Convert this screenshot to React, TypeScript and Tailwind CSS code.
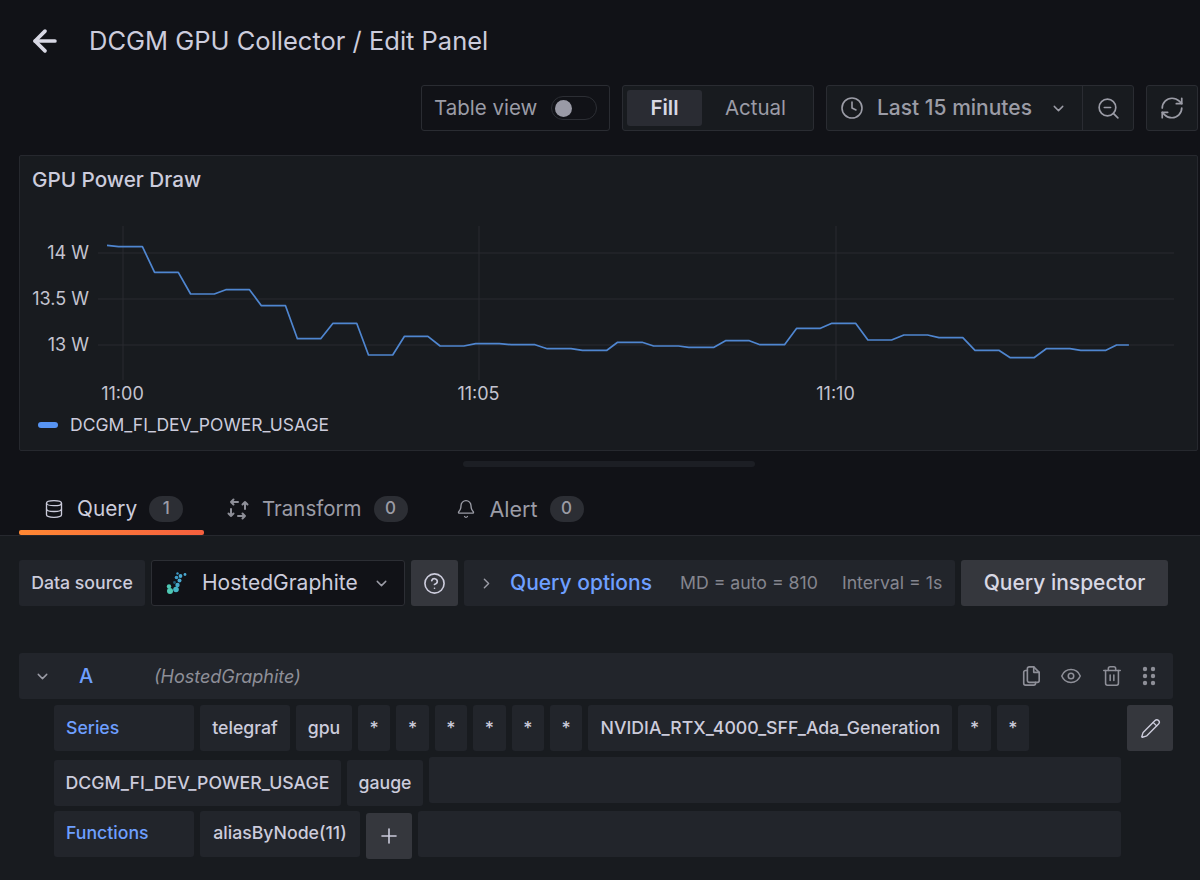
import React from 'react';
import {
  ArrowLeft, Bell, ChevronDown, ChevronRight, CircleHelp, Clock, Database, Eye,
  Pencil, Plus, RefreshCw, Trash2, ZoomOut,
} from 'lucide-react';

// Series trace, in page coordinates
const trace = [
  [107, 245.3], [118.6, 246.7], [142.4, 246.7], [154.6, 272.3], [178.3, 272.3], [190.6, 294], [214.3, 294],
  [225.8, 289.7], [249.5, 289.7], [261.4, 305.7], [285.5, 305.7], [297.4, 338.7], [320.7, 338.7], [333, 323.3],
  [356.7, 323.3], [368.5, 355], [392.7, 355], [404.5, 336.3], [427.9, 336.3], [440.1, 346], [463.8, 346],
  [475.7, 343.7], [499.4, 343.7], [511.3, 344.7], [535, 344.7], [547.3, 348.7], [571, 348.7], [582.5, 350.3],
  [606.9, 350.3], [617.6, 342.3], [642.1, 342.3], [653.6, 346], [678.5, 346], [688.8, 347.3], [714, 347.3],
  [725.5, 340.7], [749.3, 340.7], [760, 344.7], [784.5, 344.7], [796.7, 328.3], [820.4, 328.3], [831.9, 323.3],
  [855.6, 323.3], [867.9, 340], [891.6, 340], [903.9, 335], [927.6, 335], [939, 337.7], [962.8, 337.7],
  [975, 350.3], [998.8, 350.3], [1010.3, 357.7], [1034, 357.7], [1046.2, 348.7], [1070, 348.7], [1080.7, 350.3],
  [1105.9, 350.3], [1116.6, 345], [1128.9, 345],
];

const Seg: React.FC<{ className?: string; children?: React.ReactNode }> = ({ className = '', children }) => (
  <div className={`flex h-[46px] shrink-0 items-center rounded-[3px] bg-[#22252b] text-[17.7px] font-medium ${className}`}>
    {children}
  </div>
);

const Star = () => <Seg className="w-[32.4px] justify-center text-[#ccccdc]">*</Seg>;

const Badge: React.FC<{ n: number }> = ({ n }) => (
  <span className="ml-[12px] flex h-[26px] w-[34px] items-center justify-center rounded-full bg-[#2c2e34] text-[17px] font-medium text-[#9b9ca6]">
    {n}
  </span>
);

const TransformIcon = () => (
  <svg width="22" height="22" viewBox="0 0 22 22" fill="none" stroke="#8e8f98" strokeWidth="2" strokeLinecap="round" strokeLinejoin="round">
    <path d="M11 4H4M6.500 1.500L4 4l2.500 2.500" />
    <path d="M4 11v7M1.500 15.500L4 18l2.500-2.500" />
    <path d="M11 18h7M15.500 15.500L18 18l-2.500 2.500" />
    <path d="M18 11V4M15.500 6.500L18 4l2.500 2.500" />
  </svg>
);

const FilesIcon = () => (
  <svg width="20" height="22" viewBox="0 0 22 24" fill="none" stroke="currentColor" strokeWidth="1.800" strokeLinecap="round" strokeLinejoin="round">
    <path d="M9 2h5l6 6v9a2 2 0 0 1-2 2H9a2 2 0 0 1-2-2V4a2 2 0 0 1 2-2z" />
    <path d="M14 2v6h6" />
    <path d="M7 6H5a2 2 0 0 0-2 2v12a2 2 0 0 0 2 2h9a2 2 0 0 0 2-2v-1" />
  </svg>
);

const GraphiteLogo = () => (
  <svg width="24" height="24" viewBox="0 0 24 24">
    <circle cx="4" cy="15.500" r="2.200" fill="#4fc8b4" />
    <circle cx="5" cy="20" r="3" fill="#4fc8b4" />
    <circle cx="11" cy="18.500" r="2.800" fill="#45b5c4" />
    <circle cx="12.500" cy="14" r="2.200" fill="#45a8c8" />
    <circle cx="9.500" cy="11.500" r="1.400" fill="#1f5f7a" />
    <circle cx="14.500" cy="9.500" r="2" fill="#4aa8d0" />
    <circle cx="11.500" cy="6.500" r="1.800" fill="#3f9cc8" />
    <circle cx="15.500" cy="5" r="1.900" fill="#4aa8d0" />
    <circle cx="20" cy="3.500" r="1.400" fill="#4aa8d0" />
    <circle cx="12.500" cy="2.500" r="1.200" fill="#3f9cc8" />
  </svg>
);

const App: React.FC = () => {
  const points = trace.map(([x, y]) => `${x - 20},${y - 156}`).join(' ');

  return (
    <div className="flex h-[880px] w-[1200px] flex-col overflow-hidden bg-[#111217] font-['Inter',sans-serif] text-[#ccccdc]">
      {/* Page header */}
      <div className="flex h-[82px] items-center pl-[28px]">
        <ArrowLeft size={34} strokeWidth={2.6} className="text-[#d8d8e4]" />
        <h1 className="ml-[27px] text-[25.5px] font-normal">DCGM GPU Collector / Edit Panel</h1>
      </div>

      {/* Toolbar */}
      <div className="mt-[3px] flex h-[46px] justify-end gap-[12px] pr-[2px]">
        <div className="flex w-[189px] items-center rounded-[3px] border border-[#2a2c32] pl-[12px] text-[20.5px] text-[#9b9ca6]">
          Table view
          <span className="ml-[14px] flex h-[24px] w-[46px] items-center rounded-full border border-[#2c2e34] pl-[3px]">
            <span className="h-[17px] w-[17px] rounded-full bg-[#9a9aa6]" />
          </span>
        </div>
        <div className="flex w-[192px] items-center rounded-[3px] border border-[#2a2c32] bg-[#181b1f] p-[4px] text-[20.5px]">
          <span className="flex h-full w-[75px] items-center justify-center rounded-[3px] bg-[#2a2c33] font-semibold text-[#d8d8e4]">Fill</span>
          <span className="flex-1 text-center text-[#9b9ca6]">Actual</span>
        </div>
        <div className="flex w-[308px] rounded-[3px] border border-[#2a2c32] bg-[#181b1f] text-[#9b9ca6]">
          <div className="flex w-[256px] items-center border-r border-[#2a2c32] pl-[13px]">
            <Clock size={24} strokeWidth={1.6} />
            <span className="ml-[13px] text-[21px] font-medium">Last 15 minutes</span>
            <ChevronDown size={17} strokeWidth={2} className="ml-[18px]" />
          </div>
          <div className="flex flex-1 items-center justify-center">
            <ZoomOut size={25} strokeWidth={1.6} />
          </div>
        </div>
        <div className="flex w-[52px] items-center justify-center rounded-[3px] border border-[#2a2c32] bg-[#181b1f] text-[#9b9ca6]">
          <RefreshCw size={26} strokeWidth={1.6} />
        </div>
      </div>

      {/* Panel with chart */}
      <div className="mt-[24px] ml-[19px] mr-[2px] h-[296px] shrink-0 rounded-[2px] border border-[#26282e] bg-[#181b1f]">
        <svg width="1177" height="294" viewBox="0 0 1177 294" className="block">
          <text x="12" y="31" fill="#ccccdc" fontSize="20.7" fontWeight="500" fontFamily="Inter, sans-serif">GPU Power Draw</text>
          {[97, 143, 189].map((y) => (
            <line key={y} x1="78" x2="1154" y1={y} y2={y} stroke="#282b30" strokeWidth="1" />
          ))}
          {[103, 459, 816].map((x) => (
            <line key={x} x1={x} x2={x} y1="70" y2="224" stroke="#282b30" strokeWidth="1" />
          ))}
          <g fill="#c4c4d0" fontSize="18" fontFamily="Inter, sans-serif" textAnchor="end">
            <text x="69" y="102.500">14 W</text>
            <text x="69" y="148.500">13.5 W</text>
            <text x="69" y="194.500">13 W</text>
          </g>
          <g fill="#c4c4d0" fontSize="18" fontFamily="Inter, sans-serif" textAnchor="middle">
            <text x="102.500" y="244">11:00</text>
            <text x="458.500" y="244">11:05</text>
            <text x="815.500" y="244">11:10</text>
          </g>
          <polyline points={points} fill="none" stroke="#4f86d0" strokeWidth="1.700" strokeLinejoin="round" />
          <rect x="18" y="266" width="20" height="6" rx="3" fill="#5794f2" />
          <text x="50" y="275" fill="#ccccdc" fontSize="17.5" fontFamily="Inter, sans-serif">DCGM_FI_DEV_POWER_USAGE</text>
        </svg>
      </div>

      {/* Resize handle */}
      <div className="mt-[10px] ml-[463px] h-[6px] w-[292px] shrink-0 rounded-full bg-[#1c1e24]" />

      {/* Tabs */}
      <div className="flex h-[69px] shrink-0 items-end border-b border-[#26282e] pl-[19px]">
        <div className="relative flex h-[63px] w-[185px] items-center pl-[25px] pb-[4px] pt-[15px] text-[#ccccdc]">
          <Database size={20} strokeWidth={1.6} />
          <span className="ml-[13px] text-[20.8px]">Query</span>
          <Badge n={1} />
          <span className="absolute bottom-0 left-0 h-[5px] w-[185px] rounded-[2px] bg-gradient-to-r from-[#ff8833] to-[#f55f3e]" />
        </div>
        <div className="ml-[23px] flex h-[63px] items-center pb-[4px] pt-[15px] text-[#9b9ca6]">
          <TransformIcon />
          <span className="ml-[13px] text-[20.5px]">Transform</span>
          <Badge n={0} />
        </div>
        <div className="ml-[48px] flex h-[63px] items-center pb-[4px] pt-[15px] text-[#9b9ca6]">
          <Bell size={20} strokeWidth={1.6} />
          <span className="ml-[14px] text-[21.5px]">Alert</span>
          <Badge n={0} />
        </div>
      </div>

      {/* Query editor */}
      <div className="flex-1 bg-[#181b1f] pl-[19px] pt-[24px]">
        <div className="flex gap-[6px]">
          <Seg className="w-[126px] justify-center text-[#ccccdc]">Data source</Seg>
          <div className="flex h-[46px] w-[254px] items-center rounded-[3px] border border-[#2c2e34] bg-[#111217] pl-[13px]">
            <GraphiteLogo />
            <span className="ml-[13px] text-[21px]">HostedGraphite</span>
            <ChevronDown size={17} strokeWidth={2} className="ml-[15px] text-[#9b9ca6]" />
          </div>
          <div className="flex h-[46px] w-[47px] items-center justify-center rounded-[3px] bg-[#35373d]">
            <CircleHelp size={23} strokeWidth={1.7} />
          </div>
          <Seg className="w-[491px] pl-[14px] text-[#9b9ca6]">
            <ChevronRight size={17} strokeWidth={2} />
            <span className="ml-[15px] text-[21px] font-medium text-[#6e9fff]">Query options</span>
            <span className="ml-[28px] font-normal text-[#85868f]">MD = auto = 810</span>
            <span className="ml-[24px] font-normal text-[#85868f]">Interval = 1s</span>
          </Seg>
          <div className="flex h-[46px] w-[207px] items-center justify-center rounded-[3px] bg-[#35373d] text-[21px] font-medium text-[#d8d8e4]">
            Query inspector
          </div>
        </div>

        <div className="mt-[47px] flex h-[46px] w-[1154px] items-center rounded-[3px] bg-[#22252b] pl-[15px]">
          <ChevronDown size={17} strokeWidth={2} className="text-[#9b9ca6]" />
          <span className="ml-[28px] w-[75px] text-[20px] font-medium text-[#6e9fff]">A</span>
          <span className="text-[18px] italic text-[#8e8f98]">(HostedGraphite)</span>
          <div className="ml-auto flex items-center gap-[19px] pr-[17px] text-[#8e8f98]">
            <FilesIcon />
            <Eye size={22} strokeWidth={1.7} />
            <Trash2 size={22} strokeWidth={1.7} />
            <svg width="14" height="20" viewBox="0 0 14 20" fill="currentColor">
              <circle cx="3" cy="3" r="2.200" /><circle cx="11" cy="3" r="2.200" />
              <circle cx="3" cy="10" r="2.200" /><circle cx="11" cy="10" r="2.200" />
              <circle cx="3" cy="17" r="2.200" /><circle cx="11" cy="17" r="2.200" />
            </svg>
          </div>
        </div>

        <div className="mt-[6px] ml-[35px] flex w-[1119px] gap-[6px]">
          <Seg className="w-[140px] pl-[12px] text-[#6e9fff]">Series</Seg>
          <Seg className="w-[90px] justify-center text-[#ccccdc]">telegraf</Seg>
          <Seg className="w-[56px] justify-center text-[#ccccdc]">gpu</Seg>
          <Star /><Star /><Star /><Star /><Star /><Star />
          <Seg className="w-[364px] justify-center text-[#ccccdc]">NVIDIA_RTX_4000_SFF_Ada_Generation</Seg>
          <Star /><Star />
          <div className="ml-auto flex h-[46px] w-[46px] items-center justify-center rounded-[3px] bg-[#35373d]">
            <Pencil size={21} strokeWidth={1.6} />
          </div>
        </div>

        <div className="mt-[9px] ml-[35px] flex gap-[6px]">
          <Seg className="w-[287px] justify-center text-[#ccccdc]">DCGM_FI_DEV_POWER_USAGE</Seg>
          <Seg className="w-[76px] justify-center text-[#ccccdc]">gauge</Seg>
          <Seg className="w-[692px] -translate-y-[3px]" />
        </div>

        <div className="mt-[5px] ml-[35px] flex gap-[6px]">
          <Seg className="w-[140px] pl-[12px] pb-[2px] text-[#6e9fff]">Functions</Seg>
          <Seg className="w-[160px] justify-center pb-[2px] text-[#ccccdc]">aliasByNode(11)</Seg>
          <div className="mt-[2px] flex h-[46px] w-[46px] items-center justify-center rounded-[3px] bg-[#35373d]">
            <Plus size={24} strokeWidth={1.6} />
          </div>
          <Seg className="w-[703px]" />
        </div>
      </div>
    </div>
  );
};

export default App;
